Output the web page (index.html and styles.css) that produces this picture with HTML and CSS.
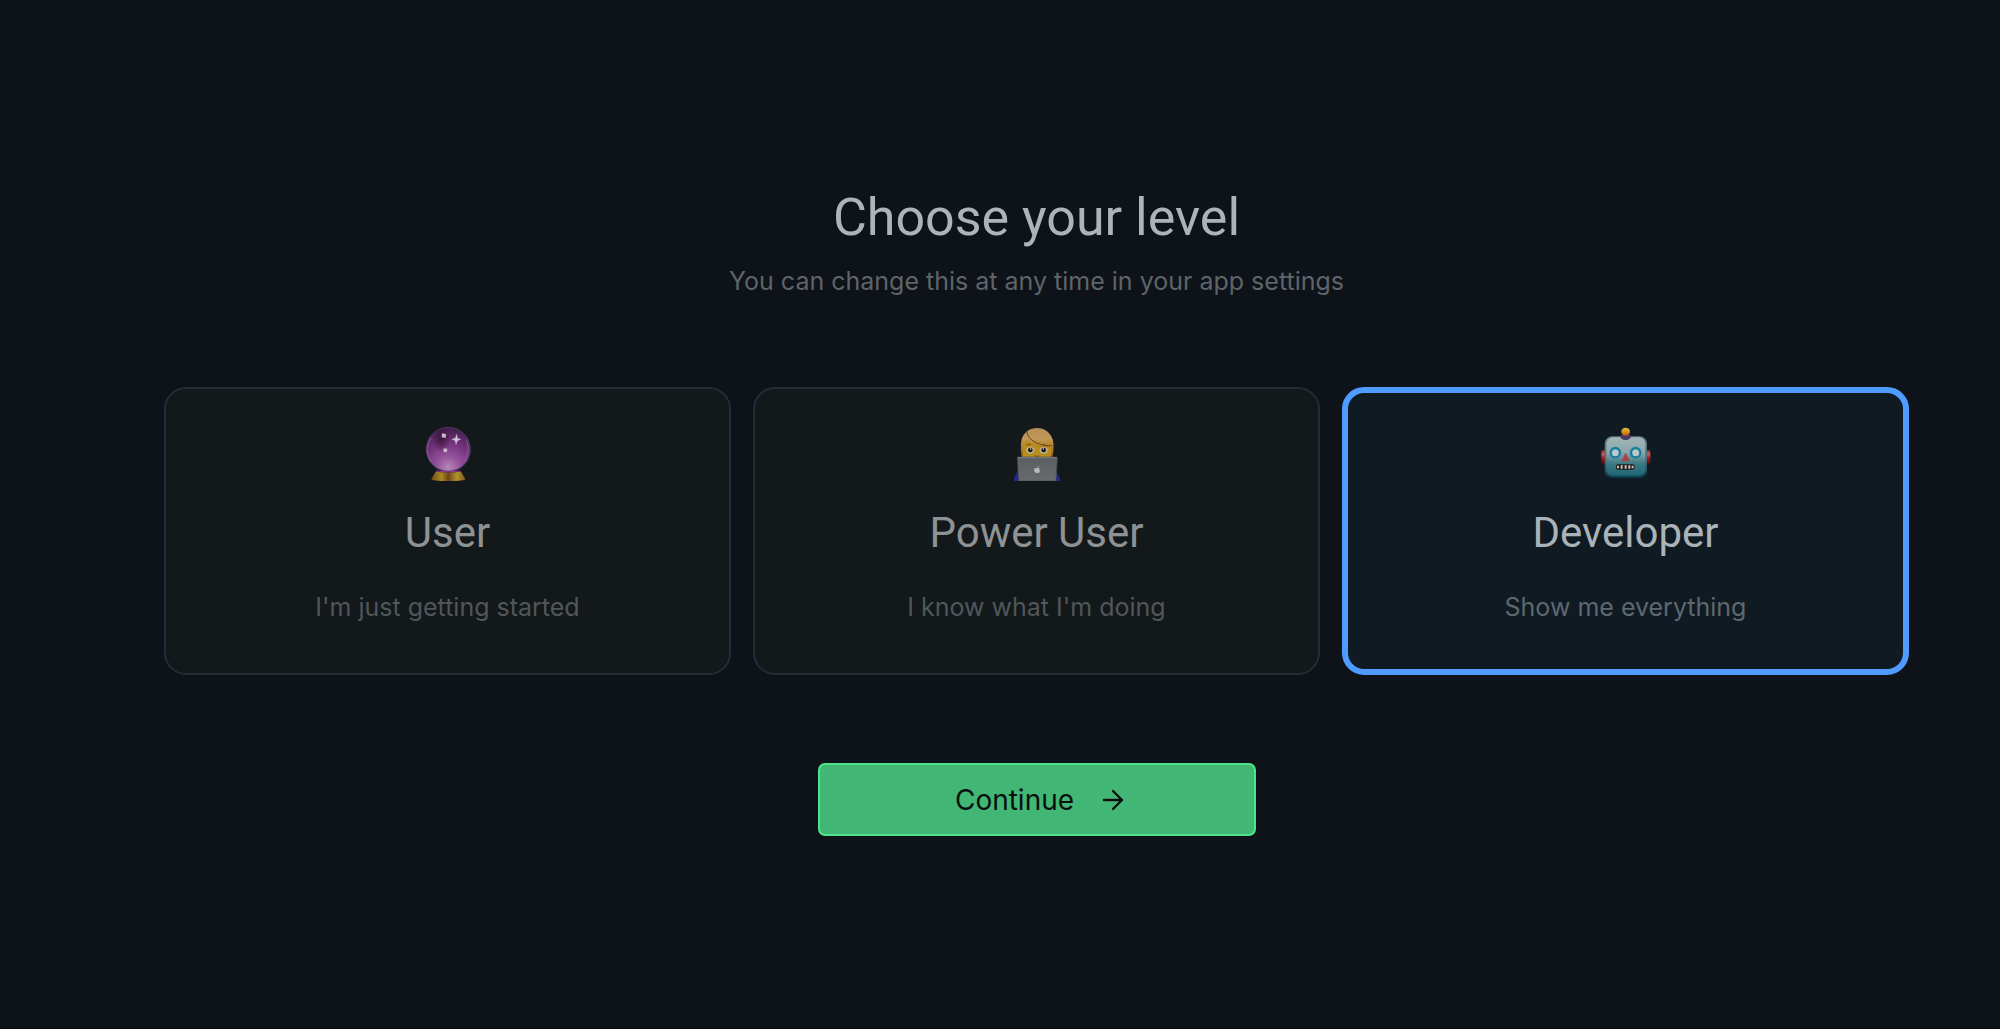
FILE: index.html
```html
<!DOCTYPE html>
<html lang="en">
<head>
  <meta charset="UTF-8" />
  <meta name="viewport" content="width=device-width, initial-scale=1.0"/>
  <title>Choose your level</title>
  <link rel="stylesheet" href="styles.css">
</head>
<body>

<form class="level-page">
  <header class="page-header">
    <h1>Choose your level</h1>
    <p>You can change this at any time in your app settings</p>
  </header>

  <div class="levels" role="radiogroup" aria-label="Level">
    <label class="level">
      <input type="radio" name="level" value="user" />
      <svg class="level-icon" viewBox="65 48 162 162" aria-hidden="true">
        <defs>
          <radialGradient id="ball" cx="50%" cy="92%" r="90%">
            <stop offset="0" stop-color="#b58ab6"/>
            <stop offset=".3" stop-color="#94529a"/>
            <stop offset=".62" stop-color="#76347f"/>
            <stop offset="1" stop-color="#431f4c"/>
          </radialGradient>
          <linearGradient id="stand">
            <stop offset="0" stop-color="#725010"/>
            <stop offset=".3" stop-color="#a98724"/>
            <stop offset=".5" stop-color="#6d4716"/>
            <stop offset=".75" stop-color="#b0942e"/>
            <stop offset="1" stop-color="#7c5a18"/>
          </linearGradient>
          <radialGradient id="shade">
            <stop offset="0" stop-color="#35102f" stop-opacity=".8"/>
            <stop offset="1" stop-color="#35102f" stop-opacity="0"/>
          </radialGradient>
        </defs>
        <circle cx="147" cy="115" r="66" fill="url(#ball)" stroke="#4b3d64" stroke-width="3"/>
        <ellipse cx="126" cy="84" rx="27" ry="40" fill="url(#shade)"/>
        <path d="M94 151q-21-38 2-71M201 86q13 32-5 65" fill="none" stroke="#a06ab0" stroke-width="4" opacity=".45"/>
        <path d="M109 182q38 4 76 0l13 22q0 6-51 6t-51-6z" fill="url(#stand)"/>
        <path d="M110 180q37 6 74 0" fill="none" stroke="#a035a8" stroke-width="3"/>
        <path d="M128 67l12 2-1 12-12-2zM133 112l11 1-1 11-11-2z" fill="#c8b6cd"/>
        <path d="M172 69l3 13 10 3-10 4-5 12-3-12-10-4 11-4z" fill="#d3c1d7" stroke="#b49aba" stroke-width="1"/>
      </svg>
      <span class="level-name">User</span>
      <span class="level-text">I'm just getting started</span>
    </label>

    <label class="level">
      <input type="radio" name="level" value="power-user" />
      <svg class="level-icon" viewBox="60 51 162 162" aria-hidden="true">
        <defs>
          <linearGradient id="hair" x2="0" y2="1">
            <stop offset="0" stop-color="#b98f58"/>
            <stop offset=".35" stop-color="#bf9858"/>
            <stop offset=".65" stop-color="#b57e22"/>
            <stop offset="1" stop-color="#8b5811"/>
          </linearGradient>
          <linearGradient id="laptop" x2="0" y2="1">
            <stop offset="0" stop-color="#5b5e62"/>
            <stop offset="1" stop-color="#686b6d"/>
          </linearGradient>
        </defs>
        <path d="M71 213q2-20 15-30h108q15 10 17 30z" fill="#202989"/>
        <path d="M95 145q-7-51 5-69 15-22 41-22 28 0 42 23 13 19 4 68z" fill="url(#hair)"/>
        <path d="M99 143q-4-30 10-52 24 21 76 24 0 18-5 28z" fill="#b98d1b"/>
        <path d="M111 66q2 21 31 34 24 10 45 7" fill="none" stroke="#77460c" stroke-width="3"/>
        <path d="M108 106q7-5 15-3M158 105q8-2 15 3" fill="none" stroke="#704811" stroke-width="3"/>
        <ellipse cx="121" cy="121" rx="12" ry="10" fill="#b7b0a0"/>
        <ellipse cx="161" cy="121" rx="12" ry="10" fill="#b7b0a0"/>
        <circle cx="121" cy="120" r="7" fill="#1d120b"/>
        <circle cx="161" cy="120" r="7" fill="#1d120b"/>
        <circle cx="122" cy="117" r="2" fill="#eee"/>
        <circle cx="160" cy="117" r="2" fill="#eee"/>
        <path d="M134 137q7 5 14 0" fill="none" stroke="#855616" stroke-width="3"/>
        <path d="M84 141h114q4 0 4 4l-4 68H86l-4-68q0-4 2-4z" fill="url(#laptop)" stroke="#494b50" stroke-width="2"/>
        <path d="M83 143h118" stroke="#7a7c85" stroke-width="3"/>
        <path d="M141 175q-8-4-9 5 1 9 6 9 4-1 8 0 3-2 4-6-5-3-1-8-3-3-8 0zM141 173q0-5 5-6 0 5-5 6z" fill="#b7b9ba"/>
      </svg>
      <span class="level-name">Power User</span>
      <span class="level-text">I know what I'm doing</span>
    </label>

    <label class="level">
      <input type="radio" name="level" value="developer" checked />
      <svg class="level-icon" viewBox="56 48 162 162" aria-hidden="true">
        <defs>
          <linearGradient id="face" x2="0" y2="1">
            <stop offset="0" stop-color="#a1b5b8"/>
            <stop offset=".4" stop-color="#8ba6aa"/>
            <stop offset=".7" stop-color="#397984"/>
            <stop offset="1" stop-color="#1f6576"/>
          </linearGradient>
          <linearGradient id="rim" x2="0" y2="1">
            <stop offset="0" stop-color="#66777b"/>
            <stop offset=".5" stop-color="#537179"/>
            <stop offset="1" stop-color="#093b49"/>
          </linearGradient>
          <linearGradient id="bulb" x2="0" y2="1">
            <stop offset="0" stop-color="#d4bb5f"/>
            <stop offset=".5" stop-color="#d79b18"/>
            <stop offset="1" stop-color="#b45b13"/>
          </linearGradient>
          <linearGradient id="ear" x2="0" y2="1">
            <stop offset="0" stop-color="#922626"/>
            <stop offset=".3" stop-color="#bf6262"/>
            <stop offset=".55" stop-color="#a51a20"/>
            <stop offset="1" stop-color="#54080e"/>
          </linearGradient>
        </defs>
        <path d="M76 117h-8q-5 1-5 8v26q0 8 5 9h8zM197 117h8q5 1 5 8v26q0 8-5 9h-8z" fill="url(#ear)"/>
        <rect x="73" y="76" width="127" height="125" rx="22" fill="url(#rim)"/>
        <rect x="78" y="79" width="117" height="115" rx="19" fill="url(#face)"/>
        <path d="M119 76q1-6 17-6t17 6q-3 11-17 11t-17-11z" fill="#493961"/>
        <ellipse cx="136" cy="62" rx="13" ry="12" fill="url(#bulb)"/>
        <circle cx="105" cy="125" r="14" fill="#a5b9bd" stroke="#147f9f" stroke-width="7"/>
        <circle cx="166" cy="125" r="14" fill="#a5b9bd" stroke="#147f9f" stroke-width="7"/>
        <circle cx="105" cy="126" r="9" fill="#bdc9ca"/>
        <circle cx="166" cy="126" r="9" fill="#bdc9ca"/>
        <path d="M136 126l11 24h-22z" fill="#b43d41" stroke="#9c4f53" stroke-width="2"/>
        <rect x="107" y="160" width="56" height="16" rx="6" fill="#221819"/>
        <path d="M113 164v8M124 163v10M136 163v10M147 163v10M157 164v8" stroke="#c2c3bb" stroke-width="6"/>
      </svg>
      <span class="level-name">Developer</span>
      <span class="level-text">Show me everything</span>
    </label>
  </div>

  <button type="submit" class="continue">
    Continue
    <svg class="arrow" viewBox="0 0 22 22" aria-hidden="true">
      <path d="M2 11h18M11 2l9 9-9 9" fill="none" stroke="currentColor" stroke-width="2.4" stroke-linecap="round" stroke-linejoin="round"/>
    </svg>
  </button>
</form>

</body>
</html>
```
FILE: styles.css
```css
* { margin: 0; padding: 0; box-sizing: border-box; }
body {
  font-family: Inter, 'Liberation Sans', sans-serif;
  background: #0e1219;
  color: #aeb3b8;
  min-height: 100vh;
  border-bottom: 1px solid #0a0713;
}
.level-page {
  display: flex;
  flex-direction: column;
  align-items: center;
  padding: 186px 91px 64px 164px;
}
.page-header {
  text-align: center;
  margin-bottom: 88px;
}
h1 {
  font-family: Roboto, 'Liberation Sans', sans-serif;
  font-size: 52px;
  line-height: 64px;
  font-weight: 400;
}
.page-header p {
  margin-top: 14px;
  font-size: 25px;
  line-height: 35px;
  color: #5f6468;
}

/* Level cards */
.levels {
  align-self: stretch;
  display: grid;
  grid-template-columns: repeat(3, 1fr);
  gap: 22px;
  margin-bottom: 88px;
}
.level {
  position: relative;
  display: flex;
  flex-direction: column;
  align-items: center;
  padding: 38px 22px 48px;
  background: #13181b;
  border: 2px solid #272b36;
  border-radius: 22px;
  text-align: center;
  cursor: pointer;
}
.level input {
  position: absolute;
  opacity: 0;
}
.level-icon {
  width: 54px;
  height: 54px;
}
.level-name {
  margin-top: 25px;
  font-family: Roboto, 'Liberation Sans', sans-serif;
  font-size: 42px;
  line-height: 54px;
  color: #8e9295;
}
.level-text {
  margin-top: 30px;
  font-size: 25px;
  line-height: 35px;
  color: #515659;
}
.level:has(input:checked) {
  padding: 34px 18px 44px;
  background: #101a23;
  border: 6px solid #4f9bff;
}
.level:has(input:checked) .level-name { color: #aab3b8; }
.level:has(input:checked) .level-text { color: #5e686f; }

/* Continue button */
.continue {
  display: flex;
  justify-content: center;
  align-items: center;
  gap: 28px;
  width: 438px;
  max-width: 100%;
  height: 73px;
  padding-left: 6px;
  font-family: inherit;
  font-size: 28px;
  color: #0a100d;
  background: #42b674;
  border: 2px solid #4ee48b;
  border-radius: 7px;
  cursor: pointer;
}
.arrow {
  width: 22px;
  height: 22px;
}
```
